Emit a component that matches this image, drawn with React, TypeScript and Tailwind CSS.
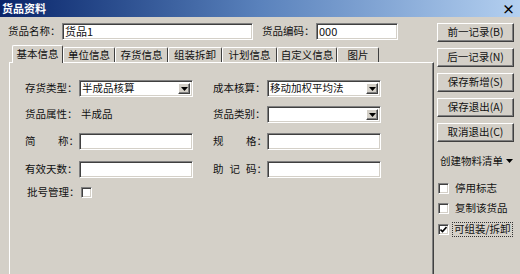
import type { ReactNode } from 'react'

const sunken =
  'border border-t-[#808080] border-l-[#808080] border-b-white border-r-white bg-white shadow-[inset_1px_1px_0_#404040,inset_-1px_-1px_0_#d4d0c8]'
const raised =
  'border border-t-white border-l-white border-b-[#404040] border-r-[#404040] shadow-[inset_-1px_-1px_0_#808080]'

function TextBox({ value = '', w }: { value?: string; w: string }) {
  return (
    <div className={`${sunken} ${w} h-[17px] flex items-center pl-[2px] text-[11px] leading-none`}>
      {value}
    </div>
  )
}

function Select({ value = '' }: { value?: string }) {
  return (
    <div className={`${sunken} w-[114px] h-[17px] flex items-center justify-between pl-[2px] pr-[2px]`}>
      <span className="text-[10.5px] leading-none whitespace-nowrap">{value}</span>
      <span className={`${raised} bg-[#d4d0c8] w-[12px] h-[11px] flex items-center justify-center`}>
        <svg width="7" height="4" viewBox="0 0 7 4">
          <path d="M0 0h7L3.5 4z" fill="#000" />
        </svg>
      </span>
    </div>
  )
}

function CheckBox({ checked = false }: { checked?: boolean }) {
  return (
    <span className={`${sunken} w-[11px] h-[11px] flex items-center justify-center shrink-0`}>
      {checked && (
        <svg width="7" height="7" viewBox="0 0 7 7">
          <path d="M0.5 3.5l2 2 4-4.5" stroke="#000" strokeWidth="1.6" fill="none" />
        </svg>
      )}
    </span>
  )
}

function Label({ children }: { children: ReactNode }) {
  return (
    <div className="w-[54px] flex justify-between text-[10.5px] leading-none whitespace-nowrap">
      {children}
    </div>
  )
}

function Field({ label, children }: { label: ReactNode; children: ReactNode }) {
  return (
    <div className="flex items-center w-[188px] h-[17px]">
      <Label>{label}</Label>
      {children}
    </div>
  )
}

const tabs = [
  { name: '基本信息', w: 'w-[51px]' },
  { name: '单位信息', w: 'w-[52px]' },
  { name: '存货信息', w: 'w-[53px]' },
  { name: '组装拆卸', w: 'w-[54px]' },
  { name: '计划信息', w: 'w-[55px]' },
  { name: '自定义信息', w: 'w-[60px]' },
  { name: '图片', w: 'w-[42px]' },
]

const buttons = ['前一记录(B)', '后一记录(N)', '保存新增(S)', '保存退出(A)', '取消退出(C)']

export default function App() {
  return (
    <div className="w-[520px] h-[274px] overflow-hidden bg-[#d4d0c8] flex flex-col text-[#111] font-['Noto_Sans_CJK_SC',sans-serif]">
      <div className="h-[17px] shrink-0 bg-gradient-to-r from-[#0a246a] via-[#5a82bc] to-[#b4d0f0] flex items-center justify-between pl-[2px] pr-[5px]">
        <span className="text-white font-bold text-[11px] leading-none">货品资料</span>
        <span className="text-[13px] font-bold leading-none text-black">×</span>
      </div>

      <div className="flex flex-1 min-h-0">
        <div className="w-[434px] flex flex-col pl-[8px] pt-[6px]">
          <div className="flex items-center h-[16px]">
            <span className="w-[54px] text-[10.5px] leading-none whitespace-nowrap">货品名称：</span>
            <TextBox value="货品1" w="w-[191px]" />
            <span className="ml-[9px] w-[54px] text-[10.5px] leading-none whitespace-nowrap">货品编码：</span>
            <TextBox value="000" w="w-[82px]" />
          </div>

          <div className="mt-[6px] ml-[4px] h-[17px] flex items-end">
            {tabs.map((t, i) => (
              <div
                key={t.name}
                className={
                  i === 0
                    ? `${t.w} relative z-10 -mb-px h-[18px] bg-[#d4d0c8] border-t border-l border-white border-r border-r-[#404040] rounded-t-[2px] flex items-center justify-center text-[10.5px] leading-none whitespace-nowrap`
                    : `${t.w} h-[15px] border-t border-l border-white border-r border-r-[#404040] rounded-t-[2px] flex items-center justify-center text-[10.5px] leading-none whitespace-nowrap`
                }
              >
                {t.name}
              </div>
            ))}
          </div>

          <div className="ml-[1px] flex-1 border-t border-l border-white border-r border-r-[#404040] shadow-[inset_-1px_0_0_#808080] flex flex-col pl-[15px] pt-[17px]">
            <div className="flex">
              <Field label={<span>存货类型：</span>}>
                <Select value="半成品核算" />
              </Field>
              <Field label={<span>成本核算：</span>}>
                <Select value="移动加权平均法" />
              </Field>
            </div>
            <div className="flex mt-[9px]">
              <div className="flex items-center w-[188px] h-[17px] text-[10.5px] leading-none whitespace-nowrap">
                <span className="w-[56px]">货品属性：</span>
                <span>半成品</span>
              </div>
              <Field label={<span>货品类别：</span>}>
                <Select />
              </Field>
            </div>
            <div className="flex mt-[10px]">
              <Field label={<><span>简</span><span>称：</span></>}>
                <TextBox w="w-[114px]" />
              </Field>
              <Field label={<><span>规</span><span>格：</span></>}>
                <TextBox w="w-[114px]" />
              </Field>
            </div>
            <div className="flex mt-[11px]">
              <Field label={<span>有效天数：</span>}>
                <TextBox w="w-[114px]" />
              </Field>
              <Field label={<><span>助</span><span>记</span><span>码：</span></>}>
                <TextBox w="w-[114px]" />
              </Field>
            </div>
            <div className="flex items-center mt-[6px] h-[17px] pl-[2px] text-[10.5px] leading-none whitespace-nowrap">
              <span className="w-[54px]">批号管理：</span>
              <CheckBox />
            </div>
          </div>
        </div>

        <div className="flex-1 flex flex-col pl-[3px] pt-[6px]">
          {buttons.map((b) => (
            <div
              key={b}
              className={`${raised} w-[77px] h-[19px] mb-[6px] flex items-center justify-center text-[10.5px] leading-none whitespace-nowrap`}
            >
              {b}
            </div>
          ))}
          <div className="mt-[6px] h-[14px] flex items-center gap-[3px] pl-[3px] text-[10.5px] leading-none whitespace-nowrap">
            创建物料清单
            <svg width="7" height="4" viewBox="0 0 7 4">
              <path d="M0 0h7L3.5 4z" fill="#000" />
            </svg>
          </div>
          <div className="mt-[15px] flex flex-col gap-[9px] pl-[1px] text-[10.5px] leading-none whitespace-nowrap">
            <div className="flex items-center gap-[6px] h-[11px]">
              <CheckBox />
              <span>停用标志</span>
            </div>
            <div className="flex items-center gap-[6px] h-[11px]">
              <CheckBox />
              <span>复制该货品</span>
            </div>
            <div className="flex items-center gap-[3px] h-[11px] mt-[1px]">
              <CheckBox checked />
              <span className="border border-dotted border-[#333] px-[1px] py-[1px]">可组装/拆卸</span>
            </div>
          </div>
        </div>
      </div>
    </div>
  )
}
